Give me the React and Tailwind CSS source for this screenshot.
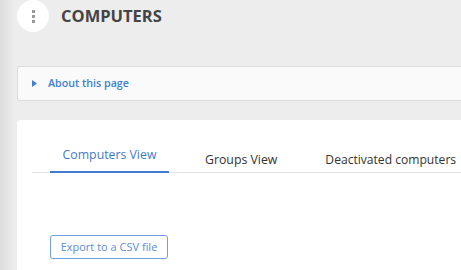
import React from "react";

function App() {
  return (
    <div
      className="w-[461px] h-[270px] overflow-hidden bg-[#ededed] flex"
      style={{ fontFamily: '"Open Sans", "Noto Sans", sans-serif' }}
    >
      <div className="w-[14px] shrink-0 bg-gradient-to-r from-[#dcdcdc] to-[#ececec]" />
      <div className="flex-1 pl-[3px] flex flex-col">
        {/* header */}
        <div className="h-[32px] flex items-center">
          <div className="w-[32px] h-[32px] rounded-full bg-white flex flex-col items-center justify-center gap-[2px]">
            <span className="w-[3px] h-[3px] bg-[#999]" />
            <span className="w-[3px] h-[3px] bg-[#999]" />
            <span className="w-[3px] h-[3px] bg-[#999]" />
          </div>
          <h1 className="ml-[12px] text-[16.5px] font-bold text-[#444]">COMPUTERS</h1>
        </div>

        {/* about */}
        <div className="mt-[34px] h-[35px] bg-[#fafafa] border border-[#dcdcdc] border-r-0 rounded-l-[3px] flex items-center">
          <svg width="5" height="7" viewBox="0 0 5 7" className="ml-[14px]">
            <path d="M0 0 L5 3.5 L0 7 Z" fill="#3f7fd4" />
          </svg>
          <span className="ml-[11px] text-[10.7px] font-semibold text-[#3f7fd4]">About this page</span>
        </div>

        {/* card */}
        <div className="mt-[19px] flex-1 bg-white rounded-tl-[4px] pl-[15px]">
          <div className="mt-[23px] flex border-b border-[#e4e4e4] h-[30px] items-stretch">
            <div className="ml-[18px] w-[119px] pt-[3px] flex justify-center border-b-[2px] border-[#3f7bd0] -mb-px">
              <span className="text-[12.3px] text-[#3f7bd0]">Computers View</span>
            </div>
            <div className="ml-[36px] pt-[3px]">
              <span className="text-[12.3px] text-[#333]">Groups View</span>
            </div>
            <div className="ml-[48px] pt-[3px]">
              <span className="text-[12.1px] text-[#333] whitespace-nowrap">Deactivated computers</span>
            </div>
          </div>
          <button className="mt-[62px] ml-[18px] w-[118px] h-[24px] border border-[#6f9fe0] rounded-[3px] text-[11px] text-[#5b8dd8] flex items-center justify-center">
            Export to a CSV file
          </button>
        </div>
      </div>
    </div>
  );
}

export default App;
